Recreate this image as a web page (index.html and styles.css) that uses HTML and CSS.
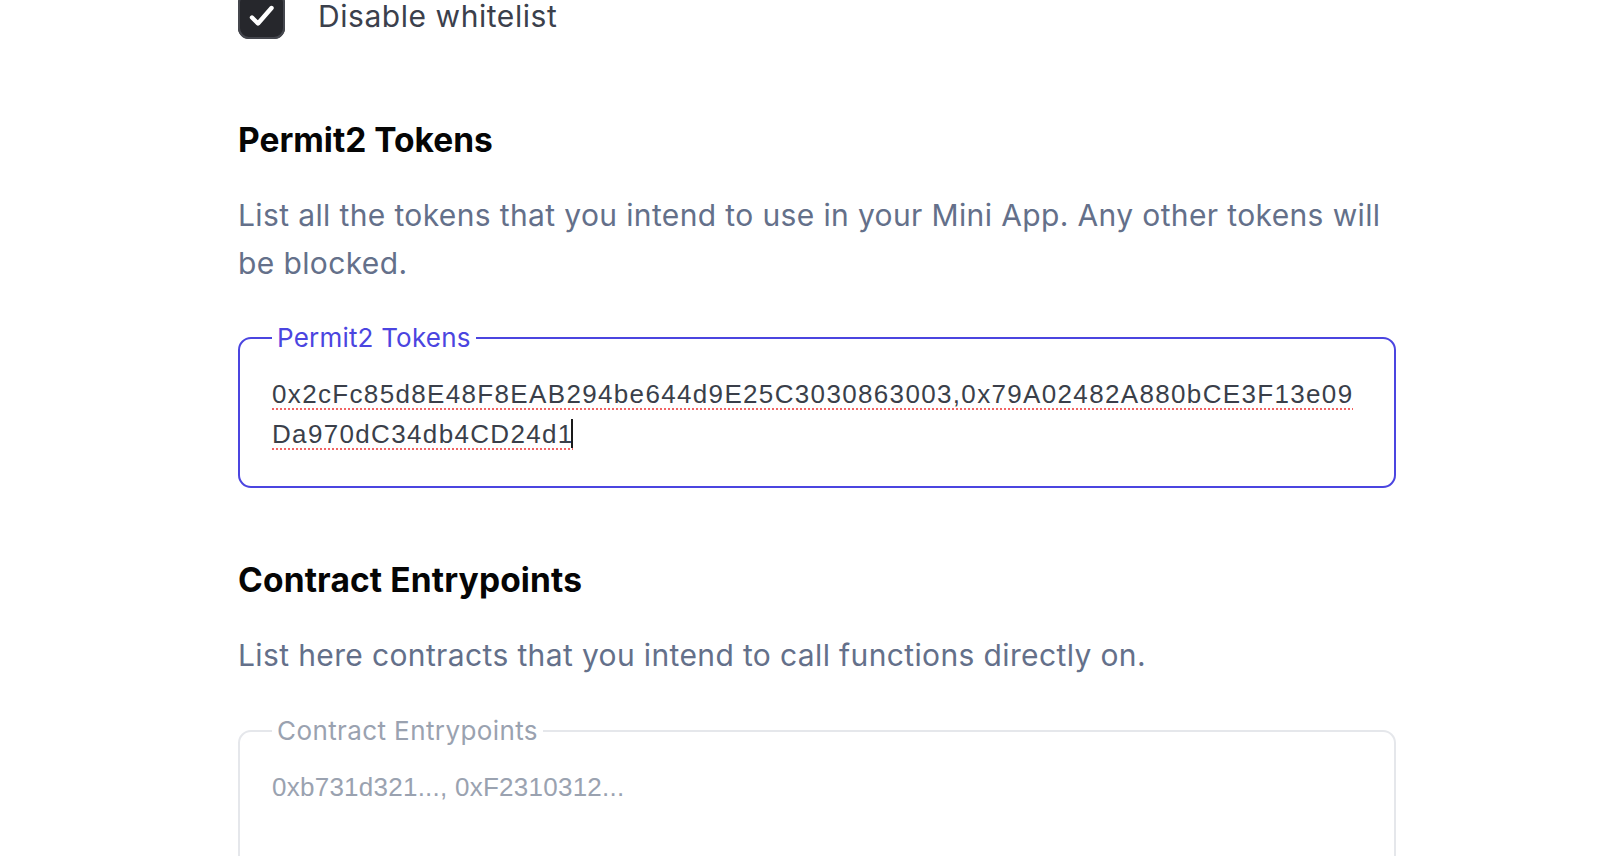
FILE: index.html
```html
<!DOCTYPE html>
<html lang="en">
<head>
<meta charset="utf-8">
<title>Permit2 Tokens</title>
<link rel="stylesheet" href="styles.css">
</head>
<body>
<main class="page">
  <label class="check-row">
    <span class="check-box">
      <svg width="47" height="47" viewBox="0 0 47 47" aria-hidden="true">
        <path d="M14 25.5 L20 31.5 L33.5 16" fill="none" stroke="#ffffff" stroke-width="4.4" stroke-linecap="round" stroke-linejoin="round"/>
      </svg>
    </span>
    <span class="check-label">Disable whitelist</span>
  </label>

  <section class="section">
    <h2 class="section-title">Permit2 Tokens</h2>
    <p class="section-desc">List all the tokens that you intend to use in your Mini App. Any other tokens will be blocked.</p>
    <fieldset class="field field-active">
      <legend class="field-legend">Permit2 Tokens</legend>
      <div class="field-value"><span class="misspelled">0x2cFc85d8E48F8EAB294be644d9E25C3030863003,0x79A02482A880bCE3F13e09</span><br><span class="misspelled">Da970dC34db4CD24d1</span><span class="caret"></span></div>
    </fieldset>
  </section>

  <section class="section section-second">
    <h2 class="section-title">Contract Entrypoints</h2>
    <p class="section-desc">List here contracts that you intend to call functions directly on.</p>
    <fieldset class="field field-idle">
      <legend class="field-legend">Contract Entrypoints</legend>
      <div class="field-value field-placeholder">0xb731d321..., 0xF2310312...</div>
    </fieldset>
  </section>
</main>
</body>
</html>
```

FILE: styles.css
```css
html, body {
  margin: 0;
  padding: 0;
  background: #ffffff;
  overflow: hidden;
}

body {
  font-family: Inter, "Noto Sans", sans-serif;
  color: #0a0a0a;
}

.page {
  width: 1158px;
  padding-left: 238px;
}

.check-row {
  display: flex;
  align-items: center;
  gap: 33px;
  height: 47px;
  margin-top: -8px;
}

.check-box {
  width: 47px;
  height: 47px;
  box-sizing: border-box;
  border-radius: 11px;
  background: #26272c;
  box-shadow: inset 0 0 0 2px #45474e;
  display: flex;
  flex: none;
}

.check-label {
  font-size: 30px;
  line-height: 40px;
  color: #3b404c;
  letter-spacing: 0.55px;
}

.section-title {
  margin: 81px 0 0;
  font-size: 33.5px;
  line-height: 40px;
  font-weight: 700;
  color: #050505;
  letter-spacing: 0;
}

.section-second .section-title {
  margin-top: 72px;
  letter-spacing: 0.15px;
}

.section-desc {
  margin: 31px 0 0;
  font-size: 30px;
  line-height: 48px;
  color: #64708a;
  letter-spacing: 0.37px;
}

.field {
  margin: 35px 0 0;
  padding: 20px 32px 32px;
  min-width: 0;
  border-radius: 13px;
  border: 2px solid #e5e7eb;
}

.section-second .field {
  margin-top: 36px;
}

.field-active {
  border-color: #4b45e0;
}

.field-legend {
  padding: 0 5px;
  font-size: 26px;
  line-height: 32px;
  color: #9aa2b0;
  letter-spacing: 0.4px;
}

.field-active .field-legend {
  color: #4b45e0;
  letter-spacing: 0.2px;
}

.field-value {
  font-family: "Liberation Sans", Arial, sans-serif;
  font-size: 26px;
  line-height: 40px;
  color: #3a3f4a;
  min-height: 120px;
  white-space: nowrap;
}

.field-active .field-value {
  min-height: 0;
  letter-spacing: 1.34px;
}

.misspelled {
  text-decoration: underline dotted #f26464;
  text-decoration-thickness: 2px;
  text-underline-offset: 5px;
}

.caret {
  display: inline-block;
  width: 2px;
  height: 29px;
  background: #1a1a1a;
  vertical-align: -5px;
  margin-left: -3px;
}

.field-placeholder {
  color: #9aa2b0;
  letter-spacing: 0.25px;
}
```
